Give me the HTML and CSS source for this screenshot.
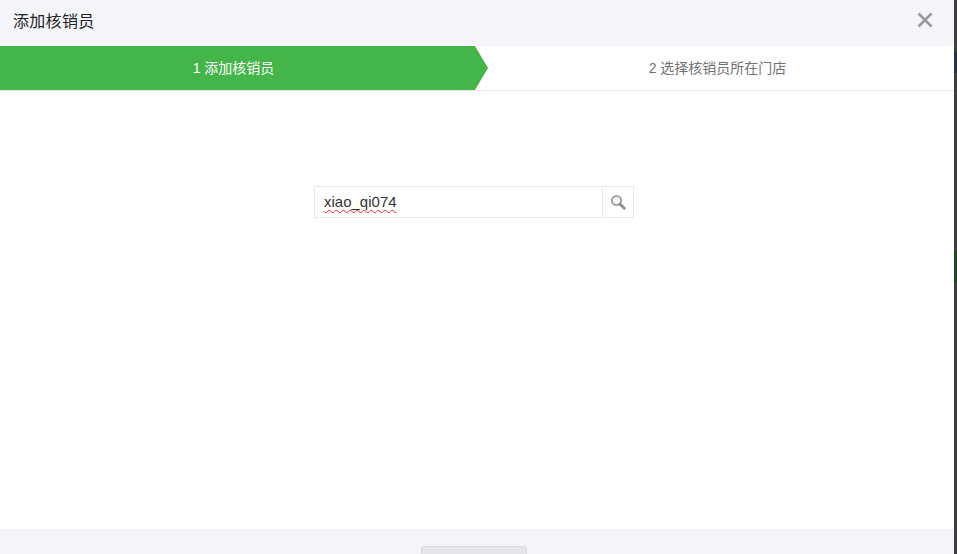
FILE: index.html
```html
<!DOCTYPE html>
<html lang="zh-CN">
<head>
<meta charset="utf-8">
<title>添加核销员</title>
<link rel="stylesheet" href="styles.css">
</head>
<body>
<div class="page">
  <main class="dialog">
    <header class="dialog-head">
      <h1 class="dialog-title">添加核销员</h1>
      <svg class="close-icon" width="16" height="16" viewBox="0 0 16 16" aria-label="关闭"><path d="M1.5 1.5 14.5 14.5M14.5 1.5 1.5 14.5" fill="none" stroke="#9a9a9a" stroke-width="2.6"/></svg>
    </header>
    <nav class="steps">
      <div class="step step-active">
        <span>1 添加核销员</span>
        <svg class="step-arrow" width="13" height="44" viewBox="0 0 13 44"><path d="M0 0 13 22 0 44Z" fill="#44b549"/></svg>
      </div>
      <div class="step step-next"><span>2 选择核销员所在门店</span></div>
    </nav>
    <section class="dialog-body">
      <div class="search">
        <div class="search-field"><span class="search-text">xiao_qi074</span></div>
        <div class="search-btn">
          <svg width="16" height="16" viewBox="0 0 16 16"><circle cx="6.5" cy="6.5" r="4.6" fill="none" stroke="#a3a3a3" stroke-width="2"/><path d="M10 10 14.2 14.2" stroke="#909090" stroke-width="3" stroke-linecap="round"/></svg>
        </div>
      </div>
    </section>
    <footer class="dialog-foot"><div class="foot-btn"></div></footer>
  </main>
  <aside class="backdrop">
    <div class="backdrop-navy"></div>
    <div class="backdrop-green"></div>
  </aside>
</div>
</body>
</html>
```

FILE: styles.css
```css
* { box-sizing: border-box; }
html, body { margin: 0; height: 100%; overflow: hidden; }
body { font-family: "Liberation Sans", "Noto Sans CJK SC", sans-serif; background: #fff; }
.page { display: flex; width: 957px; height: 554px; }
.dialog { width: 954px; height: 554px; display: flex; flex-direction: column; background: #fff; }
.dialog-head { height: 46px; flex: none; display: flex; align-items: center; justify-content: space-between; padding: 0 21px 6px 13px; background: #f4f5f9; }
.dialog-title { margin: 0; font-size: 16px; font-weight: 400; letter-spacing: 0.3px; color: #222; }
.close-icon { display: block; }
.steps { height: 45px; flex: none; display: flex; border-bottom: 1px solid #e7e7eb; }
.step { height: 44px; display: flex; align-items: center; justify-content: center; font-size: 14px; padding-bottom: 2px; }
.step-active { position: relative; width: 475px; padding-right: 8px; background: #44b549; color: #fff; }
.step-arrow { position: absolute; left: 100%; top: 0; display: block; }
.step-next { flex: 1; color: #717171; padding-left: 6px; }
.dialog-body { flex: 1; padding: 95px 6px 0 0; display: flex; justify-content: center; align-items: flex-start; }
.search { width: 320px; height: 32px; display: flex; border: 1px solid #e7e7eb; }
.search-field { flex: 1; display: flex; align-items: center; padding: 0 0 2px 9px; font-size: 15px; color: #333; }
.search-text { text-decoration: underline wavy #e22; text-decoration-thickness: 1px; text-underline-offset: 2px; text-decoration-skip-ink: none; }
.search-btn { width: 31px; flex: none; display: flex; align-items: center; justify-content: center; border-left: 1px solid #e7e7eb; }
.dialog-foot { height: 25px; flex: none; display: flex; justify-content: center; align-items: flex-start; padding: 17px 7px 0 0; background: #f4f5f9; overflow: hidden; }
.foot-btn { width: 106px; height: 30px; flex: none; background: #e6e6ea; border: 1px solid #d9dadc; border-radius: 3px; }
.backdrop { width: 3px; flex: none; background: #3f3f3f; padding-top: 52px; }
.backdrop-navy { height: 21px; background: #2a3342; }
.backdrop-green { height: 32px; margin-top: 178px; background: #1c4a20; }
```
